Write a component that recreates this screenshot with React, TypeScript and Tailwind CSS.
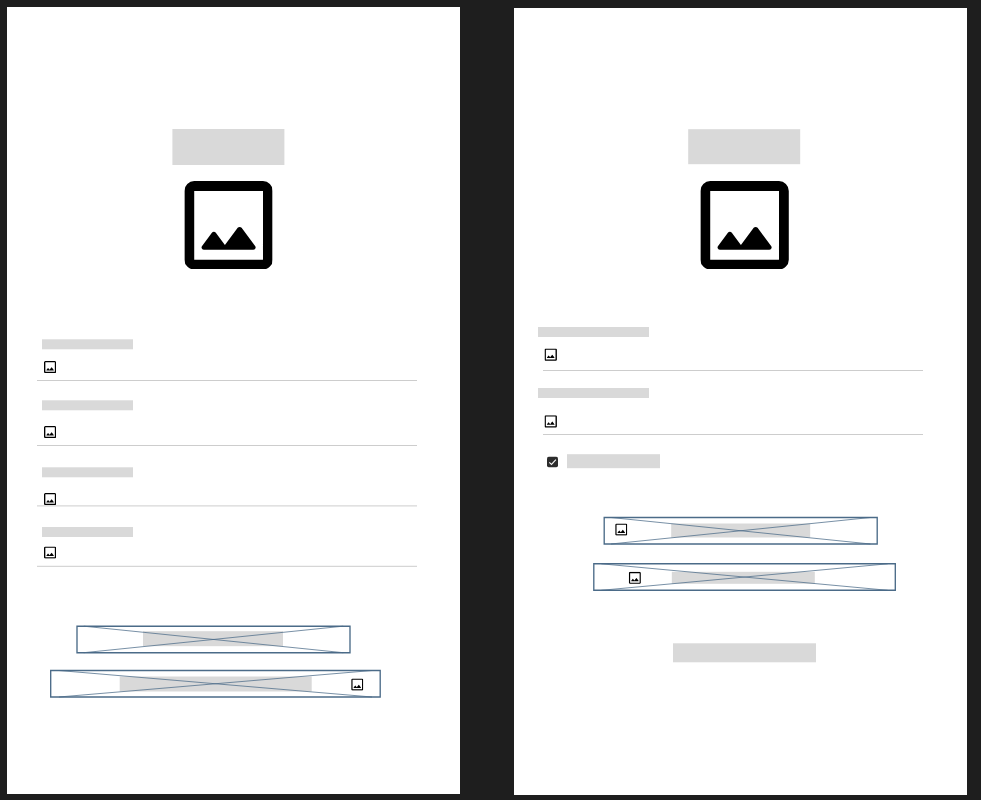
import React from "react";

type Styled = { className: string };

function ImageIcon({ className }: Styled) {
  return (
    <svg viewBox="3 3 18 18" className={`block shrink-0 ${className}`} fill="black">
      <path d="M5 21q-.825 0-1.412-.587T3 19V5q0-.825.588-1.412T5 3h14q.825 0 1.413.588T21 5v14q0 .825-.587 1.413T19 21zm0-2h14V5H5zm2-2h10q.3 0 .45-.275t-.05-.525l-2.75-3.675q-.15-.2-.4-.2t-.4.2L11.25 16L9.4 13.525q-.15-.2-.4-.2t-.4.2l-2 2.675q-.2.25-.05.525T7 17" />
    </svg>
  );
}

function Block({ className }: Styled) {
  return <div className={`shrink-0 bg-[#d9d9d9] ${className}`} />;
}

function Line({ className }: Styled) {
  return <div className={`h-px w-[380px] shrink-0 bg-[#cdcdcd] ${className}`} />;
}

// Placeholder button: outlined box whose diagonals run over the content.
function CrossedBox({ className, children }: Styled & { children: React.ReactNode }) {
  return (
    <div className={`relative flex shrink-0 items-start ${className}`}>
      {children}
      <svg
        className="absolute inset-0 h-full w-full overflow-visible"
        viewBox="0 0 100 100"
        preserveAspectRatio="none"
        fill="none"
        stroke="#4b6b88"
      >
        <rect width="100" height="100" strokeWidth="1.35" vectorEffect="non-scaling-stroke" />
        <path d="M2.5 0L97.5 100M2.5 100L97.5 0" strokeWidth="0.75" vectorEffect="non-scaling-stroke" />
      </svg>
    </div>
  );
}

function CheckedBox({ className }: Styled) {
  return (
    <svg viewBox="0 0 11 11" className={`block shrink-0 ${className}`}>
      <rect width="11" height="11" rx="2.2" fill="#2c2c2c" />
      <path d="M2.3 5.8L4.5 7.9L8.9 3.1" fill="none" stroke="#f5f5f5" strokeWidth="1.1" />
    </svg>
  );
}

export default function App() {
  return (
    <main className="flex h-[800px] w-[981px] items-start overflow-hidden bg-[#1e1e1e]">
      <section className="ml-[7px] mt-[7px] flex h-[786.7px] w-[452.7px] shrink-0 flex-col items-start bg-white">
        <Block className="ml-[165px] mt-[122px] h-[35.5px] w-28 translate-x-[0.4px]" />
        <ImageIcon className="ml-[177px] mt-[16.5px] size-[88.4px] translate-x-[0.4px] translate-y-[0.1px]" />

        <Block className="ml-[35px] mt-[69.9px] h-[10px] w-[91px] translate-y-[0.3px]" />
        <ImageIcon className="ml-[37px] mt-[11.7px] size-[12.2px]" />
        <Line className="ml-[30.4px] mt-[6.8px]" />

        <Block className="ml-[35px] mt-[19.4px] h-[10px] w-[91px] translate-y-[0.3px]" />
        <ImageIcon className="ml-[37px] mt-[15.6px] size-[12.2px]" />
        <Line className="ml-[30.4px] mt-[6.8px]" />

        <Block className="ml-[35px] mt-[21.3px] h-[10px] w-[91px] translate-y-[0.3px]" />
        <ImageIcon className="ml-[37px] mt-[15.6px] size-[12.2px]" />
        <Line className="ml-[30.4px] mt-[0.1px] translate-y-[0.4px]" />

        <Block className="ml-[35px] mt-[20.7px] h-[10px] w-[91px]" />
        <ImageIcon className="ml-[37px] mt-[9.5px] size-[12.2px] translate-y-[0.5px]" />
        <Line className="ml-[30.4px] mt-[7.3px] translate-y-[-0.2px]" />

        <CrossedBox className="ml-[70.3px] mt-[59.3px] h-[26.5px] w-[273px] translate-y-[0.2px]">
          <Block className="ml-[66px] mt-[5px] h-[15px] w-[140px]" />
        </CrossedBox>
        <CrossedBox className="ml-[44px] mt-[17.9px] h-[26.5px] w-[329.5px] translate-x-[-0.3px] translate-y-[0.5px]">
          <Block className="ml-[68.8px] mt-[5.4px] h-[15px] w-48" />
          <ImageIcon className="ml-[39px] mt-[7.8px] size-[12.2px] translate-x-[0.5px]" />
        </CrossedBox>
      </section>

      <section className="ml-[54.6px] mt-[8.3px] flex h-[786.7px] w-[452.8px] shrink-0 flex-col items-start bg-white">
        <Block className="ml-[174px] mt-[120.7px] h-[35.5px] w-28 translate-x-[0.2px] translate-y-[0.2px]" />
        <ImageIcon className="ml-[186.1px] mt-[16.5px] size-[88.4px] translate-x-[0.4px] translate-y-[0.1px]" />

        <Block className="ml-[23.7px] mt-[57.6px] h-[10px] w-[111.3px]" />
        <ImageIcon className="ml-[30.2px] mt-[11.4px] size-[12.4px] translate-x-[0.5px] translate-y-[0.4px]" />
        <Line className="ml-[28.7px] mt-[9.1px]" />

        <Block className="ml-[23.7px] mt-[17px] h-[10px] w-[111.3px]" />
        <ImageIcon className="ml-[30.2px] mt-[17.5px] size-[12.4px] translate-x-[0.5px] translate-y-[0.2px]" />
        <Line className="ml-[28.7px] mt-[6.1px]" />

        <div className="ml-[32.8px] mt-[19px] flex translate-y-[0.2px] items-start">
          <CheckedBox className="mt-[2.5px] size-[11px] translate-y-[0.3px]" />
          <Block className="ml-[8.5px] h-[14.5px] w-[93.3px]" />
        </div>

        <CrossedBox className="ml-[90.1px] mt-[49.1px] h-[26.5px] w-[273px] translate-x-[0.2px] translate-y-[0.5px]">
          <ImageIcon className="ml-[10.7px] mt-[5.8px] size-[12.2px]" />
          <Block className="ml-[43.5px] mt-[5.9px] h-[13.5px] w-[139.7px]" />
        </CrossedBox>
        <CrossedBox className="ml-[79.5px] mt-[19.7px] h-[26.5px] w-[301.5px] translate-x-[-0.2px] translate-y-[-0.2px]">
          <ImageIcon className="ml-[34.8px] mt-[7.9px] size-[12.2px]" />
          <Block className="ml-[31.2px] mt-[8.1px] h-[12.3px] w-[143.5px]" />
        </CrossedBox>

        <Block className="ml-[158.7px] mt-[52.9px] h-[19.3px] w-[143.3px] translate-y-[0.3px]" />
      </section>
    </main>
  );
}
